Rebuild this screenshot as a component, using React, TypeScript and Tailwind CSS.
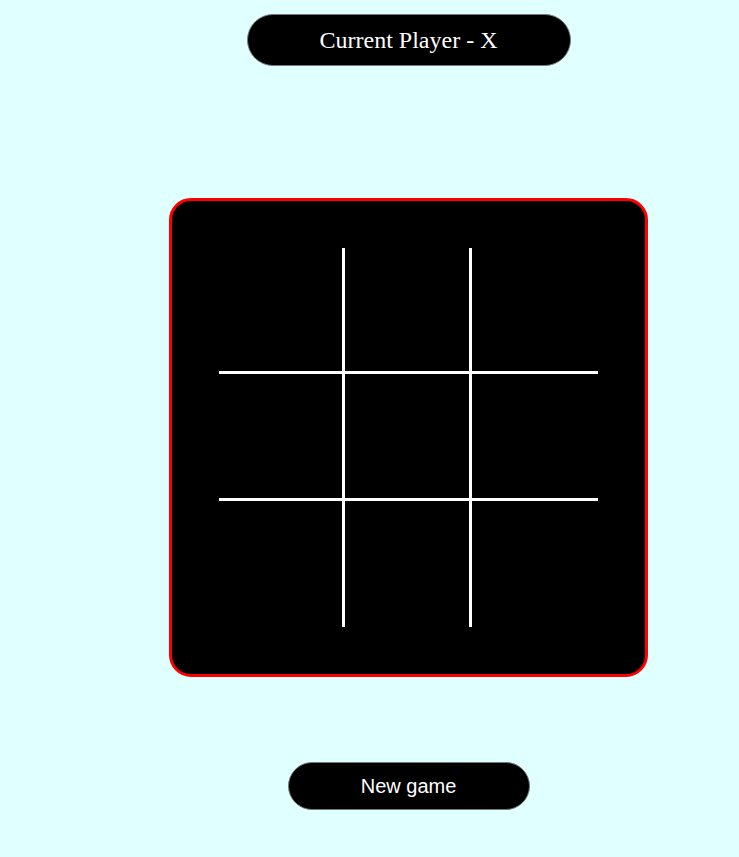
export default function App() {
  const cells = [0, 1, 2, 3, 4, 5, 6, 7, 8]

  return (
    <div className="min-h-[857px] bg-[#e0ffff] pl-[78px] flex flex-col items-center">
      {/* Current player badge */}
      <div className="mt-[14px] w-[324px] h-[52px] rounded-full bg-black border border-[#777] flex items-center justify-center text-white text-[24px] font-['Liberation_Serif',serif]">
        Current Player - X
      </div>

      {/* Board */}
      <div className="mt-[132px] w-[479px] h-[479px] bg-black border-[3px] border-[#ff0000] rounded-[22px] p-[47px]">
        <div className="grid grid-cols-3 grid-rows-3 w-full h-full">
          {cells.map((i) => (
            <div
              key={i}
              className={`border-white ${i % 3 !== 2 ? 'border-r-[3px]' : ''} ${i < 6 ? 'border-b-[3px]' : ''}`}
            />
          ))}
        </div>
      </div>

      {/* New game */}
      <button className="mt-[85px] w-[242px] h-[48px] rounded-full bg-black border border-[#777] text-white text-[20px] font-['Liberation_Sans',Arial,sans-serif]">
        New game
      </button>
    </div>
  )
}
